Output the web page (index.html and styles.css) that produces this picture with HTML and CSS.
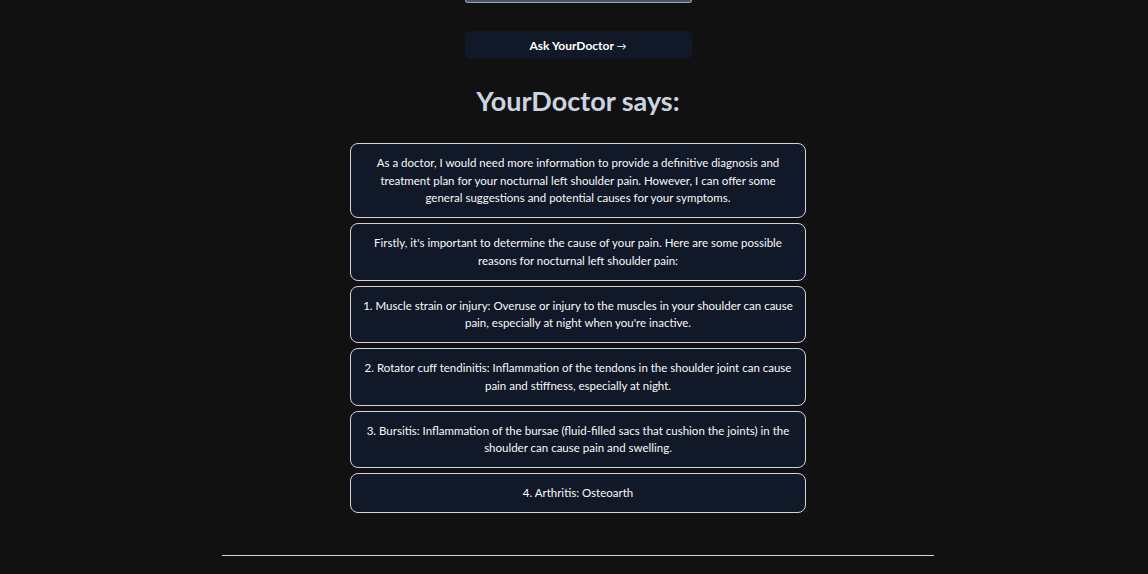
FILE: index.html
```html
<!DOCTYPE html>
<html lang="en">
<head>
<meta charset="utf-8">
<title>YourDoctor</title>
<link rel="stylesheet" href="styles.css">
</head>
<body>
<div class="page">
  <div class="input-tail"></div>
  <button class="ask">Ask YourDoctor <span class="arrow">→</span></button>
  <h2 class="says">YourDoctor says:</h2>
  <div class="answers">
    <div class="card">As a doctor, I would need more information to provide a definitive diagnosis and treatment plan for your nocturnal left shoulder pain. However, I can offer some general suggestions and potential causes for your symptoms.</div>
    <div class="card">Firstly, it's important to determine the cause of your pain. Here are some possible reasons for nocturnal left shoulder pain:</div>
    <div class="card">1. Muscle strain or injury: Overuse or injury to the muscles in your shoulder can cause pain, especially at night when you're inactive.</div>
    <div class="card">2. Rotator cuff tendinitis: Inflammation of the tendons in the shoulder joint can cause pain and stiffness, especially at night.</div>
    <div class="card">3. Bursitis: Inflammation of the bursae (fluid-filled sacs that cushion the joints) in the shoulder can cause pain and swelling.</div>
    <div class="card">4. Arthritis: Osteoarth</div>
  </div>
  <hr class="rule">
</div>
</body>
</html>
```
FILE: styles.css
```css
html, body {
  margin: 0;
  padding: 0;
  background: #111111;
}
body {
  font-family: "Lato", "Noto Sans", sans-serif;
  color: #f3f4f6;
}
.page {
  padding-left: 8px;
  display: flex;
  flex-direction: column;
  align-items: center;
}
.input-tail {
  width: 225px;
  height: 2px;
  background: #4b5563;
  border: 1px solid #9ca3af;
  border-top: none;
  border-radius: 0 0 4px 4px;
}
.ask {
  margin-top: 28px;
  width: 227px;
  height: 28px;
  border: none;
  border-radius: 6px;
  background: #111827;
  color: #ffffff;
  font-family: inherit;
  font-weight: 700;
  font-size: 12px;
  cursor: pointer;
}
.ask .arrow {
  font-size: 10px;
  font-weight: 400;
}
.says {
  margin: 26px 0 0;
  font-size: 27px;
  line-height: 32px;
  font-weight: 700;
  color: #cbd5e1;
}
.answers {
  margin-top: 26px;
  width: 456px;
  display: flex;
  flex-direction: column;
  gap: 5px;
}
.card {
  background: #111827;
  border: 1px solid #d1d5db;
  border-radius: 8px;
  padding: 10.25px 12px;
  font-size: 11.5px;
  line-height: 17.5px;
  text-align: center;
  color: #f9fafb;
}
.rule {
  margin: 42px 0 0;
  width: 712px;
  border: none;
  border-top: 1px solid #d1d5db;
  height: 0;
}
```
